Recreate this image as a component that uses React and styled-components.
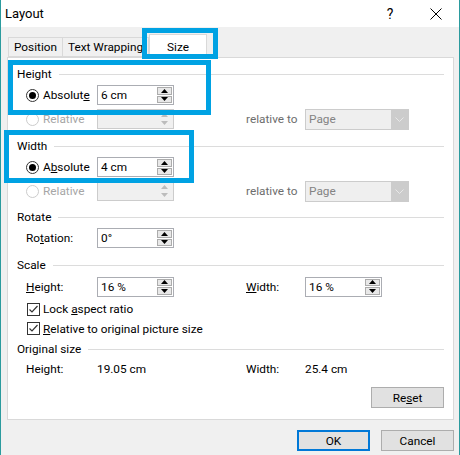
import React from 'react';
import styled, { createGlobalStyle } from 'styled-components';

const GlobalStyle = createGlobalStyle`
  html, body { margin: 0; padding: 0; background: #ffffff; }
  body { font-family: Roboto, "Liberation Sans", sans-serif; font-size: 11.8px; color: #000; }
`;

const HIGHLIGHT = '#00a2e3';

const Window = styled.div`
  position: relative;
  width: 458px;
  height: 455px;
  border-left: 1px solid #2b9b9e;
  border-right: 1px solid #2b9b9e;
  background: #f0f0f0;
  display: flex;
  flex-direction: column;
  overflow: hidden;
`;

const TitleBar = styled.div`
  height: 27px;
  background: #fff;
  display: flex;
  align-items: center;
  padding-left: 4px;
  font-size: 13px;
`;

const Title = styled.div`
  flex: 1;
`;

const TitleButton = styled.div`
  width: 46px;
  height: 27px;
  display: flex;
  align-items: center;
  justify-content: center;
  font-size: 14px;
`;

const Body = styled.div`
  padding: 6px 5px 0 6px;
  display: flex;
  flex-direction: column;
`;

const TabRow = styled.div`
  display: flex;
  align-items: flex-end;
  height: 24px;
  padding-left: 1px;
  position: relative;
  z-index: 1;
`;

const Tab = styled.div`
  height: ${p => (p.$active ? 24 : 20)}px;
  box-sizing: border-box;
  border: 1px solid #d9d9d9;
  border-bottom: ${p => (p.$active ? 'none' : '1px solid #d9d9d9')};
  border-left: ${p => (p.$first || p.$active ? '1px solid #d9d9d9' : 'none')};
  background: ${p => (p.$active ? '#fff' : '#f0f0f0')};
  display: flex;
  align-items: center;
  justify-content: center;
  margin-bottom: ${p => (p.$active ? -1 : 0)}px;
  width: ${p => p.$w}px;
`;

const Panel = styled.div`
  background: #fff;
  border: 1px solid #d9d9d9;
  height: 363px;
  box-sizing: border-box;
  padding: 7px 9px 0 9px;
  display: flex;
  flex-direction: column;
`;

const Heading = styled.div`
  display: flex;
  align-items: center;
  height: 18px;
  margin-top: ${p => p.$mt || 0}px;
  &::after {
    content: '';
    flex: 1;
    height: 1px;
    background: #dcdcdc;
    margin-left: 7px;
  }
`;

const Row = styled.div`
  display: grid;
  grid-template-columns: 71px 149px 59px auto;
  align-items: center;
  height: ${p => p.$h || 24}px;
  padding-left: 9px;
`;

const Label = styled.span`
  color: ${p => (p.$disabled ? '#a6a6a6' : p.$muted ? '#6d6d6d' : '#000')};
  white-space: nowrap;
`;

const RadioWrap = styled.label`
  display: flex;
  align-items: center;
  gap: 4px;
  white-space: nowrap;
  color: ${p => (p.$disabled ? '#a6a6a6' : '#000')};
`;

const RadioCircle = styled.span`
  width: 13px;
  height: 13px;
  box-sizing: border-box;
  border-radius: 50%;
  border: 1px solid ${p => (p.$disabled ? '#cccccc' : '#333')};
  background: #fff;
  display: flex;
  align-items: center;
  justify-content: center;
  &::after {
    content: '';
    display: ${p => (p.$checked ? 'block' : 'none')};
    width: 7px;
    height: 7px;
    border-radius: 50%;
    background: #000;
  }
`;

const CheckRow = styled.div`
  display: flex;
  align-items: center;
  gap: 3px;
  height: ${p => p.$h}px;
  padding-left: 10px;
`;

const CheckBox = styled.span`
  width: 13px;
  height: 13px;
  box-sizing: border-box;
  border: 1px solid #333;
  background: #fff;
  display: flex;
  align-items: center;
  justify-content: center;
`;

const SpinBox = styled.div`
  width: 77px;
  height: 20px;
  box-sizing: border-box;
  border: 1px solid ${p => (p.$disabled ? '#cccccc' : '#abadb3')};
  background: ${p => (p.$disabled ? '#f0f0f0' : '#fff')};
  display: flex;
  align-items: stretch;
`;

const SpinText = styled.div`
  flex: 1;
  padding-left: 3px;
  display: flex;
  align-items: center;
  color: ${p => (p.$disabled ? '#838383' : '#000')};
`;

const SpinButtons = styled.div`
  width: 15px;
  display: flex;
  flex-direction: column;
  gap: 1px;
  padding: 1px 1px 1px 0;
`;

const SpinButton = styled.div`
  flex: 1;
  background: ${p => (p.$disabled ? '#f0f0f0' : '#e8e8e8')};
  border: 1px solid ${p => (p.$disabled ? '#f0f0f0' : '#acacac')};
  display: flex;
  align-items: center;
  justify-content: center;
`;

const Select = styled.div`
  width: 104px;
  height: 21px;
  box-sizing: border-box;
  border: 1px solid #cccccc;
  background: #efefef;
  display: flex;
  color: #838383;
`;

const SelectText = styled.div`
  flex: 1;
  padding-left: 3px;
  display: flex;
  align-items: center;
`;

const SelectArrow = styled.div`
  width: 17px;
  background: #cccccc;
  display: flex;
  align-items: center;
  justify-content: center;
`;

const Value = styled.span``;

const Button = styled.div`
  width: 73px;
  height: 21px;
  box-sizing: border-box;
  border: ${p => (p.$default ? '2px solid #0078d7' : '1px solid #adadad')};
  background: #e1e1e1;
  display: flex;
  align-items: center;
  justify-content: center;
`;

const ResetRow = styled.div`
  display: flex;
  justify-content: flex-end;
  margin-top: 8px;
`;

const Footer = styled.div`
  display: flex;
  justify-content: flex-end;
  gap: 11px;
  padding-top: 10px;
`;

const Highlight = styled.div`
  position: absolute;
  left: ${p => p.$x}px;
  top: ${p => p.$y}px;
  width: ${p => p.$w}px;
  height: ${p => p.$h}px;
  box-sizing: border-box;
  border: 5px solid ${HIGHLIGHT};
  pointer-events: none;
  z-index: 5;
`;

const Arrow = ({ up, disabled }) => (
  <svg width="7" height="4" viewBox="0 0 7 4">
    <path d={up ? 'M0 4 L3.5 0 L7 4 Z' : 'M0 0 L3.5 4 L7 0 Z'} fill={disabled ? '#bcbcbc' : '#000'} />
  </svg>
);

const Spin = ({ value, disabled }) => (
  <SpinBox $disabled={disabled}>
    <SpinText $disabled={disabled}>{value}</SpinText>
    <SpinButtons>
      <SpinButton $disabled={disabled}><Arrow up disabled={disabled} /></SpinButton>
      <SpinButton $disabled={disabled}><Arrow disabled={disabled} /></SpinButton>
    </SpinButtons>
  </SpinBox>
);

const Radio = ({ checked, disabled, children }) => (
  <RadioWrap $disabled={disabled}>
    <RadioCircle $checked={checked} $disabled={disabled} />
    {children}
  </RadioWrap>
);

const Check = () => (
  <CheckBox>
    <svg width="11" height="11" viewBox="0 0 11 11">
      <path d="M1.5 5.5 L4 8 L9.5 2" fill="none" stroke="#333" strokeWidth="1.2" />
    </svg>
  </CheckBox>
);

const PageSelect = () => (
  <Select>
    <SelectText>Page</SelectText>
    <SelectArrow>
      <svg width="9" height="5" viewBox="0 0 9 5">
        <path d="M0.5 0.5 L4.5 4.5 L8.5 0.5" fill="none" stroke="#e8e8e8" strokeWidth="1" />
      </svg>
    </SelectArrow>
  </Select>
);

const SizeBlock = ({ title, mt, ul, value }) => (
  <>
    <Heading $mt={mt}>{title}</Heading>
    <Row>
      <Radio checked>{ul}</Radio>
      <Spin value={value} />
    </Row>
    <Row>
      <Radio disabled>Relative</Radio>
      <Spin disabled value="" />
      <Label $muted>relative to</Label>
      <PageSelect />
    </Row>
  </>
);

export default function App() {
  return (
    <>
      <GlobalStyle />
      <Window>
        <TitleBar>
          <Title>Layout</Title>
          <TitleButton>?</TitleButton>
          <TitleButton>
            <svg width="12" height="12" viewBox="0 0 12 12">
              <path d="M0.5 0.5 L11.5 11.5 M11.5 0.5 L0.5 11.5" stroke="#000" strokeWidth="1" />
            </svg>
          </TitleButton>
        </TitleBar>
        <Body>
          <TabRow>
            <Tab $first $w={55}>Position</Tab>
            <Tab $w={86}>Text Wrapping</Tab>
            <Tab $active $w={58}>Size</Tab>
          </TabRow>
          <Panel>
            <SizeBlock title="Height" value="6 cm" ul={<span>Absolut<u>e</u></span>} />
            <SizeBlock title="Width" mt={6} value="4 cm" ul={<span>A<u>b</u>solute</span>} />
            <Heading $mt={5}>Rotate</Heading>
            <Row>
              <Label>Ro<u>t</u>ation:</Label>
              <Spin value="0°" />
            </Row>
            <Heading $mt={6}>Scale</Heading>
            <Row $h={25}>
              <Label><u>H</u>eight:</Label>
              <Spin value="16 %" />
              <Label><u>W</u>idth:</Label>
              <Spin value="16 %" />
            </Row>
            <CheckRow $h={20}>
              <Check />
              <span>Lock <u>a</u>spect ratio</span>
            </CheckRow>
            <CheckRow $h={19}>
              <Check />
              <span><u>R</u>elative to original picture size</span>
            </CheckRow>
            <Heading $mt={2}>Original size</Heading>
            <Row $h={21}>
              <Label>Height:</Label>
              <Value>19.05 cm</Value>
              <Label>Width:</Label>
              <Value>25.4 cm</Value>
            </Row>
            <ResetRow>
              <Button>Re<u>s</u>et</Button>
            </ResetRow>
          </Panel>
          <Footer>
            <Button $default>OK</Button>
            <Button>Cancel</Button>
          </Footer>
        </Body>
        <Highlight $x={141} $y={28} $w={76} $h={31} />
        <Highlight $x={7} $y={60} $w={203} $h={55} />
        <Highlight $x={3} $y={130} $w={190} $h={53} />
      </Window>
    </>
  );
}
